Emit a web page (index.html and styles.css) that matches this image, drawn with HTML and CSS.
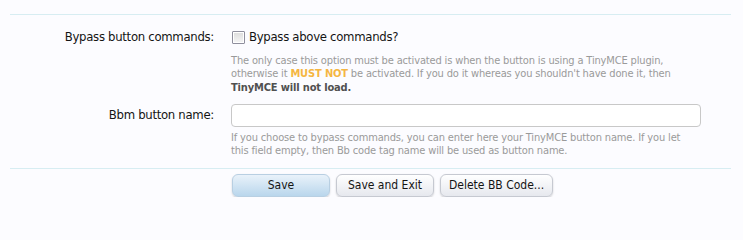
FILE: index.html
```html
<!DOCTYPE html>
<html>
<head>
<meta charset="utf-8">
<link rel="stylesheet" href="styles.css">
</head>
<body>
<form class="form">
  <div class="sep"></div>
  <dl class="row row-first">
    <dt class="label">Bypass button commands:</dt>
    <dd class="ctrl">
      <label class="check"><span class="box"></span>Bypass above commands?</label>
      <p class="help">The only case this option must be activated is when the button is using a TinyMCE plugin,<br>otherwise it <strong class="warn">MUST NOT</strong> be activated. If you do it whereas you shouldn't have done it, then<br><strong class="strong">TinyMCE will not load.</strong></p>
    </dd>
  </dl>
  <dl class="row row-second">
    <dt class="label label-input">Bbm button name:</dt>
    <dd class="ctrl">
      <input class="text" type="text">
      <p class="help help-2">If you choose to bypass commands, you can enter here your TinyMCE button name. If you let<br>this field empty, then Bb code tag name will be used as button name.</p>
    </dd>
  </dl>
  <div class="sep sep-bottom"></div>
  <div class="buttons">
    <button type="button" class="btn primary">Save</button>
    <button type="button" class="btn">Save and Exit</button>
    <button type="button" class="btn wide">Delete BB Code...</button>
  </div>
</form>
</body>
</html>
```
FILE: styles.css
```css
html, body {
  margin: 0;
  padding: 0;
  background: #fcfcff;
}
body {
  font-family: "DejaVu Sans Condensed", "DejaVu Sans", sans-serif;
  color: #141414;
}
.form {
  padding: 14px 12px 0 10px;
  margin: 0;
}
.sep {
  border-top: 1px solid #d7edf2;
}
.row {
  display: grid;
  grid-template-columns: 204px 470px;
  column-gap: 17px;
  margin: 0;
}
.row-first {
  margin-top: 14px;
}
.row-second {
  margin-top: 10px;
}
.label {
  text-align: right;
  font-size: 13px;
  line-height: 16px;
  letter-spacing: -0.3px;
  margin: 0;
}
.label-input {
  padding-top: 3px;
}
.ctrl {
  margin: 0;
}
.check {
  display: flex;
  align-items: center;
  gap: 4px;
  font-size: 13px;
  line-height: 16px;
  letter-spacing: -0.3px;
  padding-left: 1px;
}
.box {
  width: 11px;
  height: 11px;
  border: 1px solid #8f8f9d;
  background: linear-gradient(#dcdcdc, #f6f6f6);
  border-radius: 1px;
  box-shadow: inset 0 0 0 1px #fff;
}
.help {
  margin: 9px 0 0;
  font-size: 11px;
  line-height: 13.3px;
  letter-spacing: -0.15px;
  color: #9a9a9a;
}
.help-2 {
  margin-top: 4px;
  line-height: 13.5px;
}
.warn {
  color: #f5b642;
}
.strong {
  color: #505050;
}
.text {
  display: block;
  box-sizing: border-box;
  width: 470px;
  height: 23px;
  margin: 0;
  border: 1px solid #c8c8c8;
  border-radius: 4px;
  background: #fff;
  font-family: inherit;
  font-size: 13px;
  padding: 2px 4px;
}
.sep-bottom {
  margin-top: 10px;
}
.buttons {
  display: flex;
  gap: 6px;
  padding: 5px 0 0 222px;
}
.btn {
  box-sizing: border-box;
  height: 23px;
  min-width: 98px;
  padding: 0 8px;
  font-family: inherit;
  font-size: 12px;
  color: #141414;
  border: 1px solid #c6c9d1;
  border-radius: 6px;
  background: linear-gradient(#ffffff, #e6e8ee);
  box-shadow: 0 1px 2px rgba(0, 0, 0, 0.18);
}
.btn.primary {
  border-color: #b8cfe2;
  background: linear-gradient(#e9f2fa, #b9d6ec);
}
.btn.wide {
  min-width: 110px;
}
```
